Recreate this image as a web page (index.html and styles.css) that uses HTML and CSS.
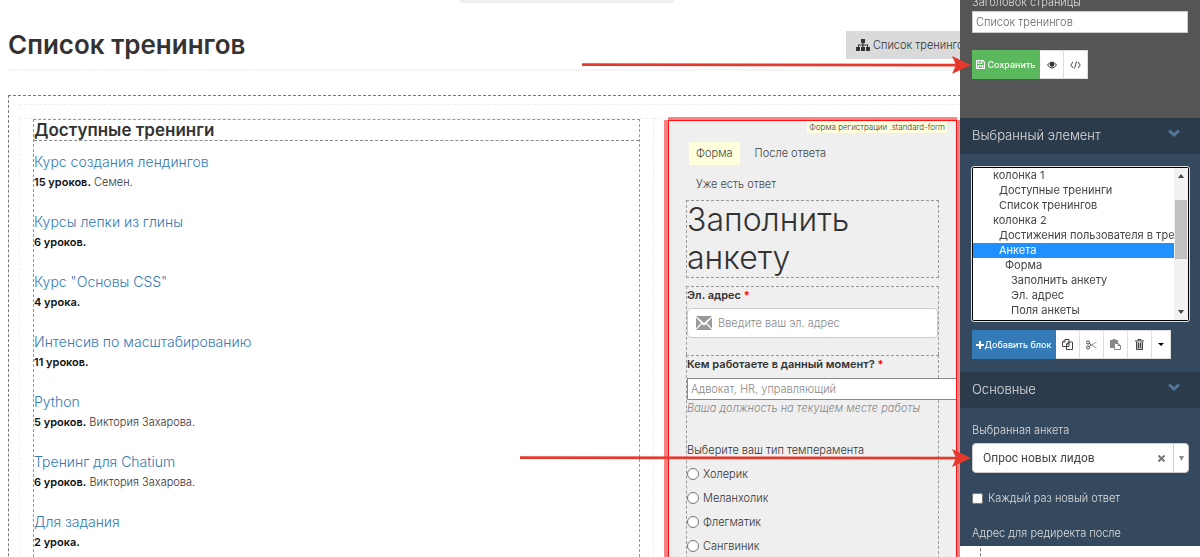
FILE: index.html
```
<!DOCTYPE html>
<html lang="ru">
  <head>
    <meta charset="utf-8" />
    <meta name="viewport" content="width=device-width, initial-scale=1.0" />
    <title>Список тренингов</title>
    <link rel="stylesheet" href="styles.css">
  </head>
  <body>
    <main class="page">
      <div class="page-tab"></div>
      <header class="page-header">
        <h1>Список тренингов</h1>
        <a class="list-link" href="#list">
          <svg width="14" height="12" viewBox="0 0 14 12" fill="#333"><path d="M5 0h4v4H7.6v1.400H12V8h2v4h-4V8h1V6.400H7.600V8H9v4H5V8h1.400V6.400H3V8h1v4H0V8h2V5.400h4.400V4H5z"/></svg>
          Список тренингов
        </a>
      </header>

      <div class="workspace">
        <div class="row">
          <section class="column column-main">
            <div class="block">
              <h2>Доступные тренинги</h2>
              <ul class="trainings">
                <li><a href="#t1">Курс создания лендингов</a><p><b>15 уроков.</b> Семен.</p></li>
                <li><a href="#t2">Курсы лепки из глины</a><p><b>6 уроков.</b></p></li>
                <li><a href="#t3">Курс "Основы CSS"</a><p><b>4 урока.</b></p></li>
                <li><a href="#t4">Интенсив по масштабированию</a><p><b>11 уроков.</b></p></li>
                <li><a href="#t5">Python</a><p><b>5 уроков.</b> Виктория Захарова.</p></li>
                <li><a href="#t6">Тренинг для Chatium</a><p><b>6 уроков.</b> Виктория Захарова.</p></li>
                <li><a href="#t7">Для задания</a><p><b>2 урока.</b></p></li>
              </ul>
            </div>
          </section>
          <section class="column column-side">
            <form class="form-block">
              <span class="block-name">Форма регистрации .standard-form</span>
              <nav class="form-tabs">
                <a class="active" href="#form">Форма</a>
                <a href="#after">После ответа</a>
                <a href="#exists">Уже есть ответ</a>
              </nav>
              <h2 class="form-title">Заполнить анкету</h2>
              <div class="field field-email">
                <label class="field-label" for="email">Эл. адрес <i>*</i></label>
                <div class="email-box">
                  <svg width="16" height="14" viewBox="0 0 16 14" fill="#999"><path d="M0 0h16L8 7zM0 1.500L5 7l-5 5.500zM16 1.500L11 7l5 5.500zM0 14l6-6 2 1.700L10 8l6 6z"/></svg>
                  <input id="email" type="email" placeholder="Введите ваш эл. адрес" />
                </div>
              </div>
              <div class="field field-questions">
                <label class="field-label" for="job">Кем работаете в данный момент? <i>*</i></label>
                <input class="job" id="job" type="text" placeholder="Адвокат, HR, управляющий" />
                <p class="hint">Ваша должность на текущем месте работы</p>
                <fieldset>
                  <legend>Выберите ваш тип темперамента</legend>
                  <label><input type="radio" name="type" />Холерик</label>
                  <label><input type="radio" name="type" />Меланхолик</label>
                  <label><input type="radio" name="type" />Флегматик</label>
                  <label><input type="radio" name="type" />Сангвиник</label>
                </fieldset>
              </div>
            </form>
          </section>
        </div>
      </div>
    </main>

    <aside class="sidebar">
      <div class="page-settings">
        <label for="page-title">Заголовок страницы</label>
        <input id="page-title" type="text" value="Список тренингов" />
        <div class="btn-group">
          <button class="btn btn-save" type="button">
            <svg width="9" height="9" viewBox="0 0 10 10" fill="none" stroke="#fff" stroke-width="1.200"><path d="M.6.6h7l1.800 1.800v7H.6zM2.500.6v3h4v-3M2.500 9.400V6.500h5v2.900"/></svg>
            Сохранить
          </button>
          <button class="btn" type="button" aria-label="Просмотр">
            <svg width="10" height="8" viewBox="0 0 10 8"><path d="M.5 4Q5-2 9.500 4 5 10 .5 4z" fill="#fff" stroke="#333"/><circle cx="5" cy="3.500" r="2.300" fill="#333"/></svg>
          </button>
          <button class="btn" type="button" aria-label="Код">
            <svg width="11" height="8" viewBox="0 0 11 8" fill="none" stroke="#444"><path d="M3 1L.8 4 3 7M8 1l2.200 3L8 7M6.500.5l-2 7"/></svg>
          </button>
        </div>
      </div>

      <h3>Выбранный элемент
        <svg width="12" height="8" viewBox="0 0 12 8" fill="none" stroke="#53749b" stroke-width="3"><path d="M1 1.500l5 4.500 5-4.500"/></svg>
      </h3>
      <div class="panel panel-element">
        <div class="elements-box">
          <select class="elements" id="elements" size="10" aria-label="Элементы страницы">
            <option>Страница</option>
            <option class="level-1">Заголовок</option>
            <option class="level-1">Строка</option>
            <option class="level-1">колонка 1</option>
            <option class="level-2">Доступные тренинги</option>
            <option class="level-2">Список тренингов</option>
            <option class="level-1">колонка 2</option>
            <option class="level-2">Достижения пользователя в тренингах</option>
            <option class="level-2" selected>Анкета</option>
            <option class="level-3">Форма</option>
            <option class="level-4">Заполнить анкету</option>
            <option class="level-4">Эл. адрес</option>
            <option class="level-4">Поля анкеты</option>
            <option class="level-4">Кнопка</option>
            <option class="level-3">После ответа</option>
            <option class="level-4">Заголовок</option>
            <option class="level-4">Текст</option>
            <option class="level-3">Уже есть ответ</option>
            <option class="level-4">Текст</option>
            <option class="level-4">Кнопка</option>
          </select>
          <div class="scrollbar">
            <svg width="6" height="4" viewBox="0 0 6 4" fill="#444"><path d="M0 4h6L3 0z"/></svg>
            <div class="scrollbar-thumb"></div>
            <svg width="6" height="4" viewBox="0 0 6 4" fill="#444"><path d="M0 0h6L3 4z"/></svg>
          </div>
        </div>
        <div class="btn-group">
          <button class="btn btn-add" type="button">
            <svg width="8" height="8" viewBox="0 0 8 8" stroke="#fff" stroke-width="2"><path d="M4 0v8M0 4h8"/></svg>Добавить блок
          </button>
          <button class="btn" type="button" aria-label="Копировать">
            <svg width="11" height="11" viewBox="0 0 11 11" fill="#fff" stroke="#444"><path d="M3 .5h4v7H.5V3zM3 .5V3H.5M6.500 3h4v7.500h-6V5zM6.500 3v2h-2"/></svg>
          </button>
          <button class="btn" type="button" aria-label="Вырезать">
            <svg width="11" height="10" viewBox="0 0 11 10" fill="none" stroke="#444"><circle cx="2" cy="2.500" r="1.500"/><circle cx="2" cy="7.500" r="1.500"/><path d="M3.300 3.300L5.500 5M3.300 6.700L5.500 5"/><path d="M5.500 5l5 3M5.500 5l5-3" stroke="#999"/></svg>
          </button>
          <button class="btn" type="button" aria-label="Вставить">
            <svg width="11" height="11" viewBox="0 0 11 11"><path d="M0 1h2.500V0h3v1H8v3H4v5H0z" fill="#888"/><path d="M4.500 4.500h3.500l2.500 2v4h-6zM8 4.500v2h2.500" fill="#fff" stroke="#888"/></svg>
          </button>
          <button class="btn" type="button" aria-label="Удалить">
            <svg width="9" height="11" viewBox="0 0 9 11"><path d="M0 2h9M3 2V.5h3V2" fill="none" stroke="#444"/><path d="M1.500 2.500v8h6v-8" fill="#bbb" stroke="#444"/><path d="M3.500 4v5M5.500 4v5" stroke="#444"/></svg>
          </button>
          <button class="btn btn-caret" type="button" aria-label="Ещё"><svg width="6" height="3" viewBox="0 0 6 3"><path d="M0 0h6L3 3z"/></svg></button>
        </div>
      </div>

      <h3>Основные
        <svg width="12" height="8" viewBox="0 0 12 8" fill="none" stroke="#53749b" stroke-width="3"><path d="M1 1.500l5 4.500 5-4.500"/></svg>
      </h3>
      <div class="panel panel-main">
        <label for="survey">Выбранная анкета</label>
        <div class="survey">
          <select id="survey"><option>Опрос новых лидов</option></select>
          <button type="button" aria-label="Очистить"><svg width="7" height="7" viewBox="0 0 7 7" stroke="#777" stroke-width="2"><path d="M.5.5l6 6M6.500.5l-6 6"/></svg></button>
          <span class="survey-arrow"><svg width="5" height="5" viewBox="0 0 5 5" fill="#888"><path d="M0 0h5L2.500 5z"/></svg></span>
        </div>
        <label class="check"><input type="checkbox" />Каждый раз новый ответ</label>
        <p>Адрес для редиректа после</p>
      </div>
    </aside>

    <svg class="arrow arrow-save" width="390" height="20" viewBox="0 0 390 20" fill="#e5392d"><path d="M1 8.200L378 8.700V11.600L1 11z"/><path d="M371 1l19 9-19 9 4-9z"/></svg>
    <svg class="arrow arrow-survey" width="452" height="20" viewBox="0 0 452 20" fill="#e5392d"><path d="M1 8.200L440 8.700V11.600L1 11z"/><path d="M433 1l19 9-19 9 4-9z"/></svg>

    <script>
      // three rows of 15px are scrolled out above
      document.getElementById('elements').scrollTop = 45;
    </script>
  </body>
</html>
```
FILE: styles.css
```
* {
  margin: 0;
  padding: 0;
  box-sizing: border-box;
}

body {
  height: 100vh;
  overflow: hidden;
  position: relative;
  font-family: Inter, 'Liberation Sans', sans-serif;
  font-size: 11px;
  font-weight: 300;
  line-height: 16px;
  color: #333;
  background-color: #fff;
}

input,
select,
button {
  font: inherit;
  color: inherit;
}

ul {
  list-style: none;
}

a {
  text-decoration: none;
}

svg {
  flex: none;
}

b {
  font-weight: 600;
  color: #111;
}

/* Page */
.page {
  height: 100vh;
  overflow: hidden;
  padding: 0 219px 0 8px;
}

.page-tab {
  width: 214px;
  height: 3px;
  margin-left: 452px;
  background-color: #eee;
}

.page-header {
  display: flex;
  justify-content: space-between;
  align-items: center;
  height: 68px;
  padding-top: 18px;
  border-bottom: 2px solid #f5f5f5;
}

h1 {
  font-size: 26px;
  line-height: 32px;
  font-weight: 600;
}

.list-link {
  display: flex;
  align-items: center;
  gap: 3px;
  width: 135px;
  height: 28px;
  padding-left: 10px;
  white-space: nowrap;
  color: #333;
  background-color: #dadada;
}

.workspace {
  margin-top: 24px;
  padding: 8px 0 0 10px;
  border: 1px dashed #777;
}

.row {
  display: grid;
  grid-template-columns: 634fr 327fr;
  padding-top: 13px;
  border-top: 1px dashed #eee;
}

.column {
  min-width: 0;
  border: 1px dashed #eee;
  border-width: 1px 0 0 1px;
}

.column-main {
  padding: 0 13px;
}

.block {
  border: 1px dashed #999;
  border-width: 1px 1px 0;
}

.block h2 {
  height: 21px;
  font-size: 17px;
  line-height: 20px;
  font-weight: 600;
  border-bottom: 1px dashed #888;
}

.trainings {
  display: grid;
  gap: 20px;
  padding: 11px 0 20px;
}

.trainings a {
  font-size: 14px;
  line-height: 20px;
  color: #337ab7;
}

.trainings p {
  line-height: 20px;
}

/* Form */
.column-side {
  padding: 1px 23px 0 14px;
}

.form-block {
  position: relative;
  overflow: hidden;
  padding: 21px 17px 40px;
  border: 1px solid #f11;
  box-shadow: 0 -3px #ff8080, -4px 0 #ff8080, 3px 0 #ff8080;
  background-color: #efefef;
}

.block-name {
  position: absolute;
  top: 0;
  right: 9px;
  padding: 0 2px;
  font-size: 8px;
  line-height: 12px;
  background-color: #ffffe0;
}

.form-tabs {
  display: flex;
  flex-wrap: wrap;
  gap: 8px;
  padding: 0 24px 0 3px;
}

.form-tabs a {
  padding: 3px 7px 4px;
  color: #444;
}

.form-tabs a.active {
  background-color: #ffffdd;
}

.form-title {
  margin-top: 4px;
  border: 1px dashed #999;
  font-size: 32px;
  line-height: 38px;
  font-weight: 300;
}

.field {
  border: 1px dashed #999;
}

.field-label {
  display: block;
  font-weight: 600;
}

.field i {
  color: red;
  font-style: normal;
}

.field-email {
  margin-top: 8px;
  height: 69px;
  border-bottom: 0;
}

.email-box {
  display: flex;
  align-items: center;
  gap: 6px;
  height: 30px;
  margin-top: 5px;
  padding: 0 8px;
  border: 1px solid #ccc;
  border-radius: 4px;
  background-color: #fff;
}

.email-box input {
  width: 100%;
  border: 0;
  outline: 0;
}

::placeholder {
  color: #888;
}

/* wider than the form on purpose, the block cuts it */
.job {
  display: block;
  width: 290px;
  height: 22px;
  margin-top: 6px;
  padding: 0 3px;
  border: 1px solid #888;
}

.hint {
  white-space: nowrap;
  font-style: italic;
  color: #888;
}

.field-questions {
  padding-bottom: 20px;
}

fieldset {
  margin-top: 26px;
  border: 0;
}

legend {
  margin-bottom: 4px;
}

fieldset label {
  display: flex;
  align-items: center;
  gap: 4px;
  height: 24px;
}

fieldset input {
  width: 12px;
  height: 12px;
}

/* Sidebar */
.sidebar {
  position: fixed;
  top: 0;
  right: 0;
  width: 240px;
  color: #ddd;
  background-color: #34495e;
}

.sidebar label {
  display: block;
}

.page-settings {
  height: 118px;
  padding: 0 12px;
  background-color: #555;
}

.page-settings label {
  height: 11px;
  line-height: 4px;
}

.page-settings input {
  display: block;
  width: 100%;
  height: 22px;
  margin-bottom: 17px;
  padding: 0 3px;
  border: 1px solid #ccc;
  color: #666;
  background-color: #fff;
}

.btn-group {
  display: flex;
}

.btn {
  display: flex;
  align-items: center;
  justify-content: center;
  width: 24px;
  height: 29px;
  border: 1px solid #ddd;
  border-left-width: 0;
  background-color: #fff;
}

.btn-save,
.btn-add {
  gap: 2px;
  font-size: 9px;
  font-weight: 500;
  white-space: nowrap;
  color: #fff;
}

.btn-save {
  width: 68px;
  border: 0;
  background-color: #5cb85c;
}

.btn-add {
  gap: 0;
  width: 84px;
  border: 0;
  background-color: #337ab7;
}

.btn-caret {
  width: 19px;
}

h3 {
  display: flex;
  justify-content: space-between;
  height: 36px;
  padding: 0 20px 0 12px;
  font-size: 13px;
  line-height: 34px;
  font-weight: 300;
  background-color: #2c3b4c;
}

h3 svg {
  margin-top: 11px;
}

.panel {
  padding: 13px 11px 13px 12px;
}

.elements-box {
  display: flex;
  height: 154px;
  margin-bottom: 9px;
  border: 1px solid #000;
  outline: 1px solid #ddd;
  border-radius: 2px;
  background-color: #fff;
}

.elements {
  flex: 1;
  min-width: 0;
  height: 152px;
  border: 0;
  outline: 0;
  color: #444;
  background-color: #fff;
  overflow-x: hidden;
  scrollbar-width: none;
}

.elements option {
  height: 15px;
  min-height: 15px;
  padding: 0 2px;
  line-height: 15px;
}

.elements option:checked {
  color: #fff;
  background: #1e90ff linear-gradient(#1e90ff, #1e90ff);
}

.elements .level-1 {
  padding-left: 20px;
}

.elements .level-2 {
  padding-left: 26px;
}

.elements .level-3 {
  padding-left: 32px;
}

.elements .level-4 {
  padding-left: 38px;
}

.scrollbar {
  display: flex;
  flex-direction: column;
  align-items: center;
  width: 14px;
  padding: 6px 1px;
  background-color: #f1f1f1;
}

.scrollbar-thumb {
  width: 100%;
  height: 59px;
  margin: 22px 0 auto;
  background-color: #c1c1c1;
}

.panel-main {
  padding: 14px 11px 5px 12px;
}

.survey {
  display: flex;
  height: 30px;
  margin: 5px 0 17px;
  border: 1px solid #ccc;
  border-radius: 4px;
  color: #444;
  background-color: #fff;
}

.survey select {
  flex: 1;
  padding-left: 10px;
  border: 0;
  appearance: none;
  font-family: Roboto, sans-serif;
  font-size: 12px;
  font-weight: 400;
  background-color: transparent;
}

.survey button {
  width: 24px;
  border: 0;
  background-color: transparent;
}

.survey-arrow {
  display: flex;
  align-items: center;
  justify-content: center;
  width: 15px;
  border-left: 1px solid #ccc;
}

.sidebar .check {
  display: flex;
  align-items: center;
  gap: 5px;
  margin-bottom: 19px;
}

.check input {
  width: 11px;
  height: 11px;
}

/* Pointers over the page */
.arrow {
  position: absolute;
  right: 229px;
}

.arrow-save {
  top: 55px;
}

.arrow-survey {
  top: 448px;
}
```
